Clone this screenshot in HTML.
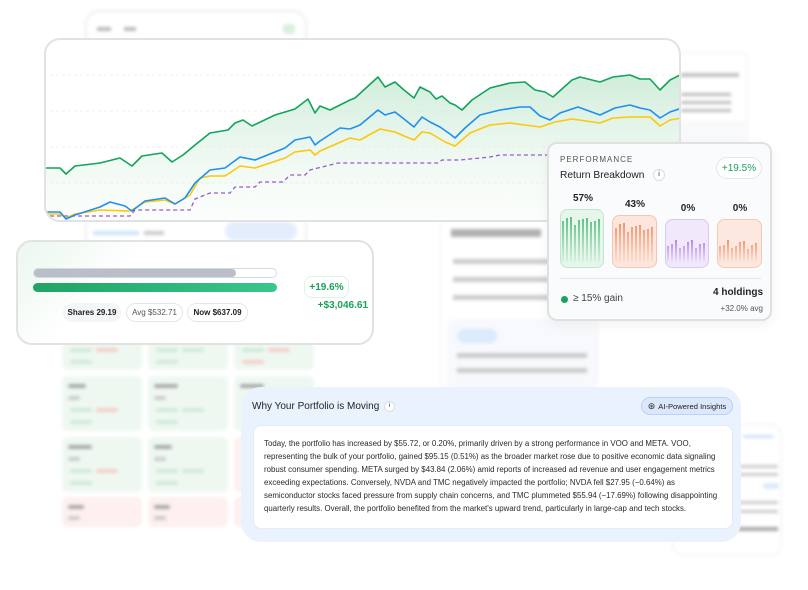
<!DOCTYPE html>
<html><head><meta charset="utf-8"><style>
*{margin:0;padding:0;box-sizing:border-box}
html,body{width:808px;height:590px;overflow:hidden}
body{background:#fff;font-family:"Liberation Sans",sans-serif;position:relative;color:#1f2328}
.abs{position:absolute}
.blur{filter:blur(1.6px)}
.tile{position:absolute;border-radius:6px;background:#eef8f1}
.tile.r{background:#fdf0ee}
.tile i{position:absolute;height:4px;border-radius:2px;background:#cfe9d7}
.tile i.rr{background:#f6cfc8}
.pill{position:absolute;border:1px solid #e3e6ea;border-radius:12px;font-size:8px;display:flex;align-items:center;justify-content:center;background:#fff}
</style></head><body>

<div class="abs blur" style="left:85px;top:10px;width:222px;height:240px;border:2px solid #efefef;border-radius:14px;background:#fff">
  <div class="abs" style="left:10px;top:15px;width:14px;height:4px;background:#bbb"></div>
  <div class="abs" style="left:37px;top:15px;width:12px;height:4px;background:#bbb"></div>
  <div class="abs" style="left:196px;top:12px;width:12px;height:10px;background:#d9f0df;border-radius:3px"></div>
  <div class="abs" style="left:6px;top:219px;width:46px;height:4px;background:#cfe2fb"></div>
  <div class="abs" style="left:57px;top:219px;width:20px;height:4px;background:#ccc"></div>
  <div class="abs" style="left:138px;top:210px;width:72px;height:18px;background:#e3eefc;border-radius:9px"></div>
</div>

<div class="abs blur" style="left:440px;top:200px;width:158px;height:190px;background:#fff;border:1px solid #f1f1f1;border-radius:10px">
  <div class="abs" style="left:10px;top:28px;width:90px;height:8px;background:#666;opacity:.5"></div>
  <div class="abs" style="left:12px;top:58px;width:100px;height:5px;background:#999;opacity:.5"></div>
  <div class="abs" style="left:12px;top:76px;width:100px;height:5px;background:#999;opacity:.5"></div>
  <div class="abs" style="left:12px;top:94px;width:100px;height:5px;background:#999;opacity:.5"></div>
  <div class="abs" style="left:6px;top:118px;width:150px;height:70px;background:#f7f9fc;border-radius:8px"></div>
  <div class="abs" style="left:16px;top:128px;width:40px;height:14px;background:#dceafd;border-radius:7px"></div>
  <div class="abs" style="left:16px;top:152px;width:130px;height:5px;background:#ccc"></div>
  <div class="abs" style="left:16px;top:167px;width:130px;height:5px;background:#ccc"></div>
</div>
<div class="abs blur" style="left:676px;top:52px;width:72px;height:160px;background:#fff;border:1px solid #f1f1f1;border-radius:10px">
  <div class="abs" style="left:4px;top:20px;width:58px;height:4px;background:#999;opacity:.6"></div>
  <div class="abs" style="left:4px;top:40px;width:50px;height:3px;background:#bbb"></div>
  <div class="abs" style="left:4px;top:48px;width:50px;height:3px;background:#bbb"></div>
  <div class="abs" style="left:4px;top:56px;width:50px;height:3px;background:#bbb"></div>
  <div class="abs" style="left:0;top:68px;width:72px;height:80px;background:#f8f9fb"></div>
</div>
<div class="abs blur" style="left:672px;top:424px;width:110px;height:132px;background:#fff;border:1px solid #eee;border-radius:12px">
  <div class="abs" style="left:70px;top:10px;width:30px;height:3px;background:#cfe2fb"></div>
  <div class="abs" style="left:65px;top:40px;width:40px;height:3px;background:#ccc"></div>
  <div class="abs" style="left:65px;top:48px;width:40px;height:3px;background:#ccc"></div>
  <div class="abs" style="left:90px;top:58px;width:16px;height:6px;background:#dceafd;border-radius:3px"></div>
  <div class="abs" style="left:65px;top:76px;width:40px;height:3px;background:#ccc"></div>
  <div class="abs" style="left:65px;top:85px;width:40px;height:3px;background:#ccc"></div>
  <div class="abs" style="left:65px;top:102px;width:40px;height:4px;background:#aaa"></div>
</div>

<div class="blur">
<div class="tile" style="left:62px;top:330px;width:80px;height:40px"><i style="left:8px;top:18px;width:22px"></i><i class="rr" style="left:34px;top:18px;width:22px"></i><i style="left:8px;top:30px;width:22px"></i></div>
<div class="tile" style="left:148px;top:330px;width:80px;height:40px"><i style="left:8px;top:18px;width:22px"></i><i style="left:34px;top:18px;width:22px"></i><i style="left:8px;top:30px;width:22px"></i></div>
<div class="tile" style="left:234px;top:330px;width:80px;height:40px"><i style="left:8px;top:18px;width:22px"></i><i class="rr" style="left:34px;top:18px;width:22px"></i><i class="rr" style="left:8px;top:30px;width:22px"></i></div>
<div class="tile" style="left:62px;top:376px;width:80px;height:55px"><i style="left:6px;top:8px;width:18px;background:#aaa"></i><i style="left:6px;top:20px;width:12px;background:#ccc"></i><i style="left:8px;top:32px;width:22px"></i><i class="rr" style="left:34px;top:32px;width:22px"></i><i style="left:8px;top:44px;width:22px"></i></div>
<div class="tile" style="left:148px;top:376px;width:80px;height:55px"><i style="left:6px;top:8px;width:24px;background:#aaa"></i><i style="left:6px;top:20px;width:12px;background:#ccc"></i><i style="left:8px;top:32px;width:22px"></i><i style="left:34px;top:32px;width:22px"></i><i style="left:8px;top:44px;width:22px"></i></div>
<div class="tile" style="left:234px;top:376px;width:80px;height:55px"><i style="left:6px;top:8px;width:24px;background:#aaa"></i></div>
<div class="tile" style="left:62px;top:437px;width:80px;height:55px"><i style="left:6px;top:8px;width:24px;background:#aaa"></i><i style="left:6px;top:20px;width:12px;background:#ccc"></i><i style="left:8px;top:32px;width:22px"></i><i class="rr" style="left:34px;top:32px;width:22px"></i><i style="left:8px;top:44px;width:22px"></i></div>
<div class="tile" style="left:148px;top:437px;width:80px;height:55px"><i style="left:6px;top:8px;width:18px;background:#aaa"></i><i style="left:6px;top:20px;width:12px;background:#ccc"></i><i style="left:8px;top:32px;width:22px"></i><i style="left:34px;top:32px;width:22px"></i><i style="left:8px;top:44px;width:22px"></i></div>
<div class="tile r" style="left:234px;top:437px;width:80px;height:55px"></div>
<div class="tile r" style="left:62px;top:497px;width:80px;height:30px"><i style="left:6px;top:8px;width:16px;background:#aaa"></i><i style="left:6px;top:19px;width:12px;background:#ccc"></i></div>
<div class="tile r" style="left:148px;top:497px;width:80px;height:30px"><i style="left:6px;top:8px;width:16px;background:#aaa"></i><i style="left:6px;top:19px;width:12px;background:#ccc"></i></div>
<div class="tile r" style="left:234px;top:497px;width:80px;height:30px"></div>
</div>

<div class="abs" style="left:44px;top:38px;width:637px;height:184px;border:2px solid #e2e2e2;border-radius:16px;background:#fff;overflow:hidden">
<svg width="637" height="184" viewBox="44 38 637 184" style="position:absolute;left:-2px;top:-2px">
<defs><linearGradient id="g" x1="0" y1="0" x2="0" y2="1"><stop offset="0" stop-color="#bfe6cd" stop-opacity=".75"/><stop offset="1" stop-color="#e8f6ec" stop-opacity=".15"/></linearGradient></defs>
<g stroke="#f0f0f0" stroke-dasharray="3 3" stroke-width="1"><line x1="44" y1="75" x2="681" y2="75"/><line x1="44" y1="111" x2="681" y2="111"/><line x1="44" y1="147" x2="681" y2="147"/><line x1="44" y1="183" x2="681" y2="183"/></g>
<path d="M45,168 L60,168 66,174 75,166 100,163 120,158 132,166 142,156 162,153 172,162 183,155 195,145 210,133 228,130 235,123 243,120 252,126 275,115 295,109 308,99 315,113 320,106 330,110 350,100 355,98 378,77 385,87 395,82 404,90 414,98 420,87 430,92 436,99 442,96 450,103 455,105 462,110 472,100 490,88 510,83 525,82 535,90 545,92 553,97 572,80 580,77 600,82 613,77 630,75 640,79 650,79 660,90 670,80 682,74 L682,222 45,222Z" fill="url(#g)"/>
<path d="M50,216 L130,216 135,210 190,210 195,199 210,193 230,193 235,187 255,187 260,182 283,182 290,175 305,175 310,170 338,163 438,163 442,160 460,160 490,157 500,155 560,155" fill="none" stroke="#9b59c9" stroke-width="1.3" stroke-dasharray="4 3"/>
<path d="M47,214 L60,214 66,218 75,214 100,210 130,211 145,202 165,200 175,204 190,195 200,178 210,176 225,176 240,166 255,168 285,158 295,152 310,150 315,155 320,151 350,138 360,140 380,129 395,132 404,136 414,140 422,132 430,133 445,142 455,146 470,133 490,125 510,123 525,125 540,127 555,122 572,119 600,123 613,118 630,117 650,117 660,126 670,120 682,118" fill="none" stroke="#fbc80a" stroke-width="1.6" stroke-linejoin="round"/>
<path d="M47,212 L60,212 66,219 75,215 100,207 110,202 125,206 132,211 145,201 165,198 175,204 185,198 195,183 210,170 225,168 240,157 255,160 285,148 295,140 310,137 315,145 320,141 340,128 350,129 360,125 378,110 385,115 395,112 404,119 414,127 422,117 430,122 440,127 450,134 455,138 465,128 480,115 500,110 520,107 530,107 540,116 550,120 560,113 578,107 600,115 615,108 630,105 640,108 650,110 660,118 670,112 682,108" fill="none" stroke="#1e90f0" stroke-width="1.6" stroke-linejoin="round"/>
<path d="M45,168 L60,168 66,174 75,166 100,163 120,158 132,166 142,156 162,153 172,162 183,155 195,145 210,133 228,130 235,123 243,120 252,126 275,115 295,109 308,99 315,113 320,106 330,110 350,100 355,98 378,77 385,87 395,82 404,90 414,98 420,87 430,92 436,99 442,96 450,103 455,105 462,110 472,100 490,88 510,83 525,82 535,90 545,92 553,97 572,80 580,77 600,82 613,77 630,75 640,79 650,79 660,90 670,80 682,74" fill="none" stroke="#14a35a" stroke-width="1.6" stroke-linejoin="round"/>
</svg>
</div>

<div class="abs" style="left:16px;top:240px;width:358px;height:105px;border:2px solid #e2e2e2;border-radius:16px;background:linear-gradient(135deg,#eaf7ee 0%,#fff 30%)">
  <div class="abs" style="left:15px;top:26px;width:244px;height:10px;border:1px solid #d6d9de;border-radius:5px;background:#fff"><div style="width:202px;height:8px;background:#b9bec8;border-radius:4px"></div></div>
  <div class="abs" style="left:15px;top:41px;width:244px;height:9px;border-radius:5px;background:linear-gradient(90deg,#1fa463,#38c78a)"></div>
  <div class="pill" style="left:286px;top:34px;width:45px;height:22px;color:#1aa25a;font-size:10px;font-weight:bold;border-radius:8px;border-color:#dff0e5">+19.6%</div>
  <div class="abs" style="left:270px;top:58px;width:80px;text-align:right;color:#1aa25a;font-size:10px;font-weight:bold">+$3,046.61</div>
  <div class="pill" style="left:45px;top:61px;width:58px;height:19px;background:#f4f5f7;border-color:#f4f5f7;font-weight:bold;color:#222">Shares 29.19</div>
  <div class="pill" style="left:108px;top:61px;width:57px;height:19px;color:#555">Avg $532.71</div>
  <div class="pill" style="left:169px;top:61px;width:61px;height:19px;font-weight:bold;color:#222">Now $637.09</div>
</div>

<div class="abs" style="left:547px;top:142px;width:225px;height:179px;border:2px solid #e0e0e0;border-radius:10px;background:#fafbfc;box-shadow:0 4px 12px rgba(0,0,0,.05)">
  <div class="abs" style="left:11px;top:11px;font-size:8px;letter-spacing:1px;color:#555">PERFORMANCE</div>
  <div class="abs" style="left:11px;top:26px;font-size:10.2px;color:#222">Return Breakdown</div>
  <div class="abs" style="left:104px;top:25px;width:12px;height:12px;border:1px solid #ddd;border-radius:50%;font-size:7px;text-align:center;line-height:10px;background:#fff">i</div>
  <div class="pill" style="left:167px;top:13px;width:46px;height:22px;color:#1aa25a;font-size:10px;border-radius:11px">+19.5%</div>
  <div class="abs" style="left:12px;top:49px;width:44px;text-align:center;font-size:10px;font-weight:bold">57%</div>
  <div class="abs" style="left:64px;top:55px;width:44px;text-align:center;font-size:10px;font-weight:bold">43%</div>
  <div class="abs" style="left:117px;top:59px;width:44px;text-align:center;font-size:10px;font-weight:bold">0%</div>
  <div class="abs" style="left:169px;top:59px;width:44px;text-align:center;font-size:10px;font-weight:bold">0%</div>
  <svg class="abs" style="left:0;top:0" width="225" height="179" viewBox="549 144 225 179">
   <defs>
    <linearGradient id="fg" x1="0" y1="0" x2="0" y2="1"><stop offset="0" stop-color="#22a85d"/><stop offset="1" stop-color="#22a85d" stop-opacity=".1"/></linearGradient>
    <linearGradient id="fo" x1="0" y1="0" x2="0" y2="1"><stop offset="0" stop-color="#f0703f"/><stop offset="1" stop-color="#f0703f" stop-opacity=".1"/></linearGradient>
    <linearGradient id="fp" x1="0" y1="0" x2="0" y2="1"><stop offset="0" stop-color="#9b5ee0"/><stop offset="1" stop-color="#9b5ee0" stop-opacity=".1"/></linearGradient>
   </defs>
   <rect x="560.5" y="209.5" width="43" height="58" rx="7" fill="#e6f6ea" stroke="#bfe6cb"/>
   <rect x="612.5" y="215.5" width="44" height="52" rx="7" fill="#fde6dc" stroke="#f6c4b0"/>
   <rect x="665.5" y="219.5" width="43" height="48" rx="7" fill="#f1e8fc" stroke="#dac7f5"/>
   <rect x="717.5" y="219.5" width="44" height="48" rx="7" fill="#fde8df" stroke="#f6c8b6"/>
   <g stroke="url(#fg)" stroke-width="1.4"><path d="M563,221V262M567,218V262M571,217V262M575,225V262M579,220V262M583,219V262M587,218V262M591,222V262M595,221V262M599,219V262"/></g>
   <g stroke="url(#fo)" stroke-width="1.4"><path d="M616,228V262M620,224V262M624,223V262M628,232V262M632,227V262M636,226V262M640,225V262M644,230V262M648,229V262M652,227V262"/></g>
   <g stroke="url(#fp)" stroke-width="1.4"><path d="M668,246V262M672,244V262M676,240V262M680,248V262M684,246V262M688,242V262M692,240V262M696,248V262M700,244V262M704,243V262"/></g>
   <g stroke="url(#fo)" stroke-width="1.4"><path d="M720,246V262M724,245V262M728,240V262M732,248V262M736,246V262M740,242V262M744,241V262M748,249V262M752,245V262M756,243V262"/></g>
   <line x1="560" y1="278.5" x2="761" y2="278.5" stroke="#e6e6e6"/>
  </svg>
  <div class="abs" style="left:12px;top:152px;width:7px;height:7px;border-radius:50%;background:#16a55b"></div>
  <div class="abs" style="left:24px;top:149px;font-size:10px;color:#444">≥ 15% gain</div>
  <div class="abs" style="left:130px;top:143px;width:84px;text-align:right;font-size:10px;font-weight:bold">4 holdings</div>
  <div class="abs" style="left:130px;top:160px;width:84px;text-align:right;font-size:8px;color:#555">+32.0% avg</div>
</div>

<div class="abs" style="left:241px;top:387px;width:500px;height:155px;border-radius:20px;background:#eaf2fd">
  <div class="abs" style="left:11px;top:14px;font-size:10px;color:#222">Why Your Portfolio is Moving</div>
  <div class="abs" style="left:143px;top:14px;width:11px;height:11px;border-radius:50%;background:#fff;border:1px solid #dde;font-size:6px;text-align:center;line-height:9px">i</div>
  <div class="abs" style="left:400px;top:10px;width:92px;height:18px;border-radius:9px;background:#dbe8fb;border:1px solid #b9d2f5;font-size:7.6px;color:#222;display:flex;align-items:center;justify-content:center;gap:3px"><span style="font-size:9px">⊛</span>AI-Powered Insights</div>
  <div class="abs" style="left:12px;top:38px;width:480px;height:104px;background:#fff;border-radius:8px;border:1px solid #e3ebf6;font-size:7.9px;line-height:12.9px;color:#2a2a2a;padding:12px 0 0 10px;white-space:nowrap">
Today, the portfolio has increased by $55.72, or 0.20%, primarily driven by a strong performance in VOO and META. VOO,<br>
representing the bulk of your portfolio, gained $95.15 (0.51%) as the broader market rose due to positive economic data signaling<br>
robust consumer spending. META surged by $43.84 (2.06%) amid reports of increased ad revenue and user engagement metrics<br>
exceeding expectations. Conversely, NVDA and TMC negatively impacted the portfolio; NVDA fell $27.95 (−0.64%) as<br>
semiconductor stocks faced pressure from supply chain concerns, and TMC plummeted $55.94 (−17.69%) following disappointing<br>
quarterly results. Overall, the portfolio benefited from the market's upward trend, particularly in large-cap and tech stocks.
  </div>
</div>

</body></html>
